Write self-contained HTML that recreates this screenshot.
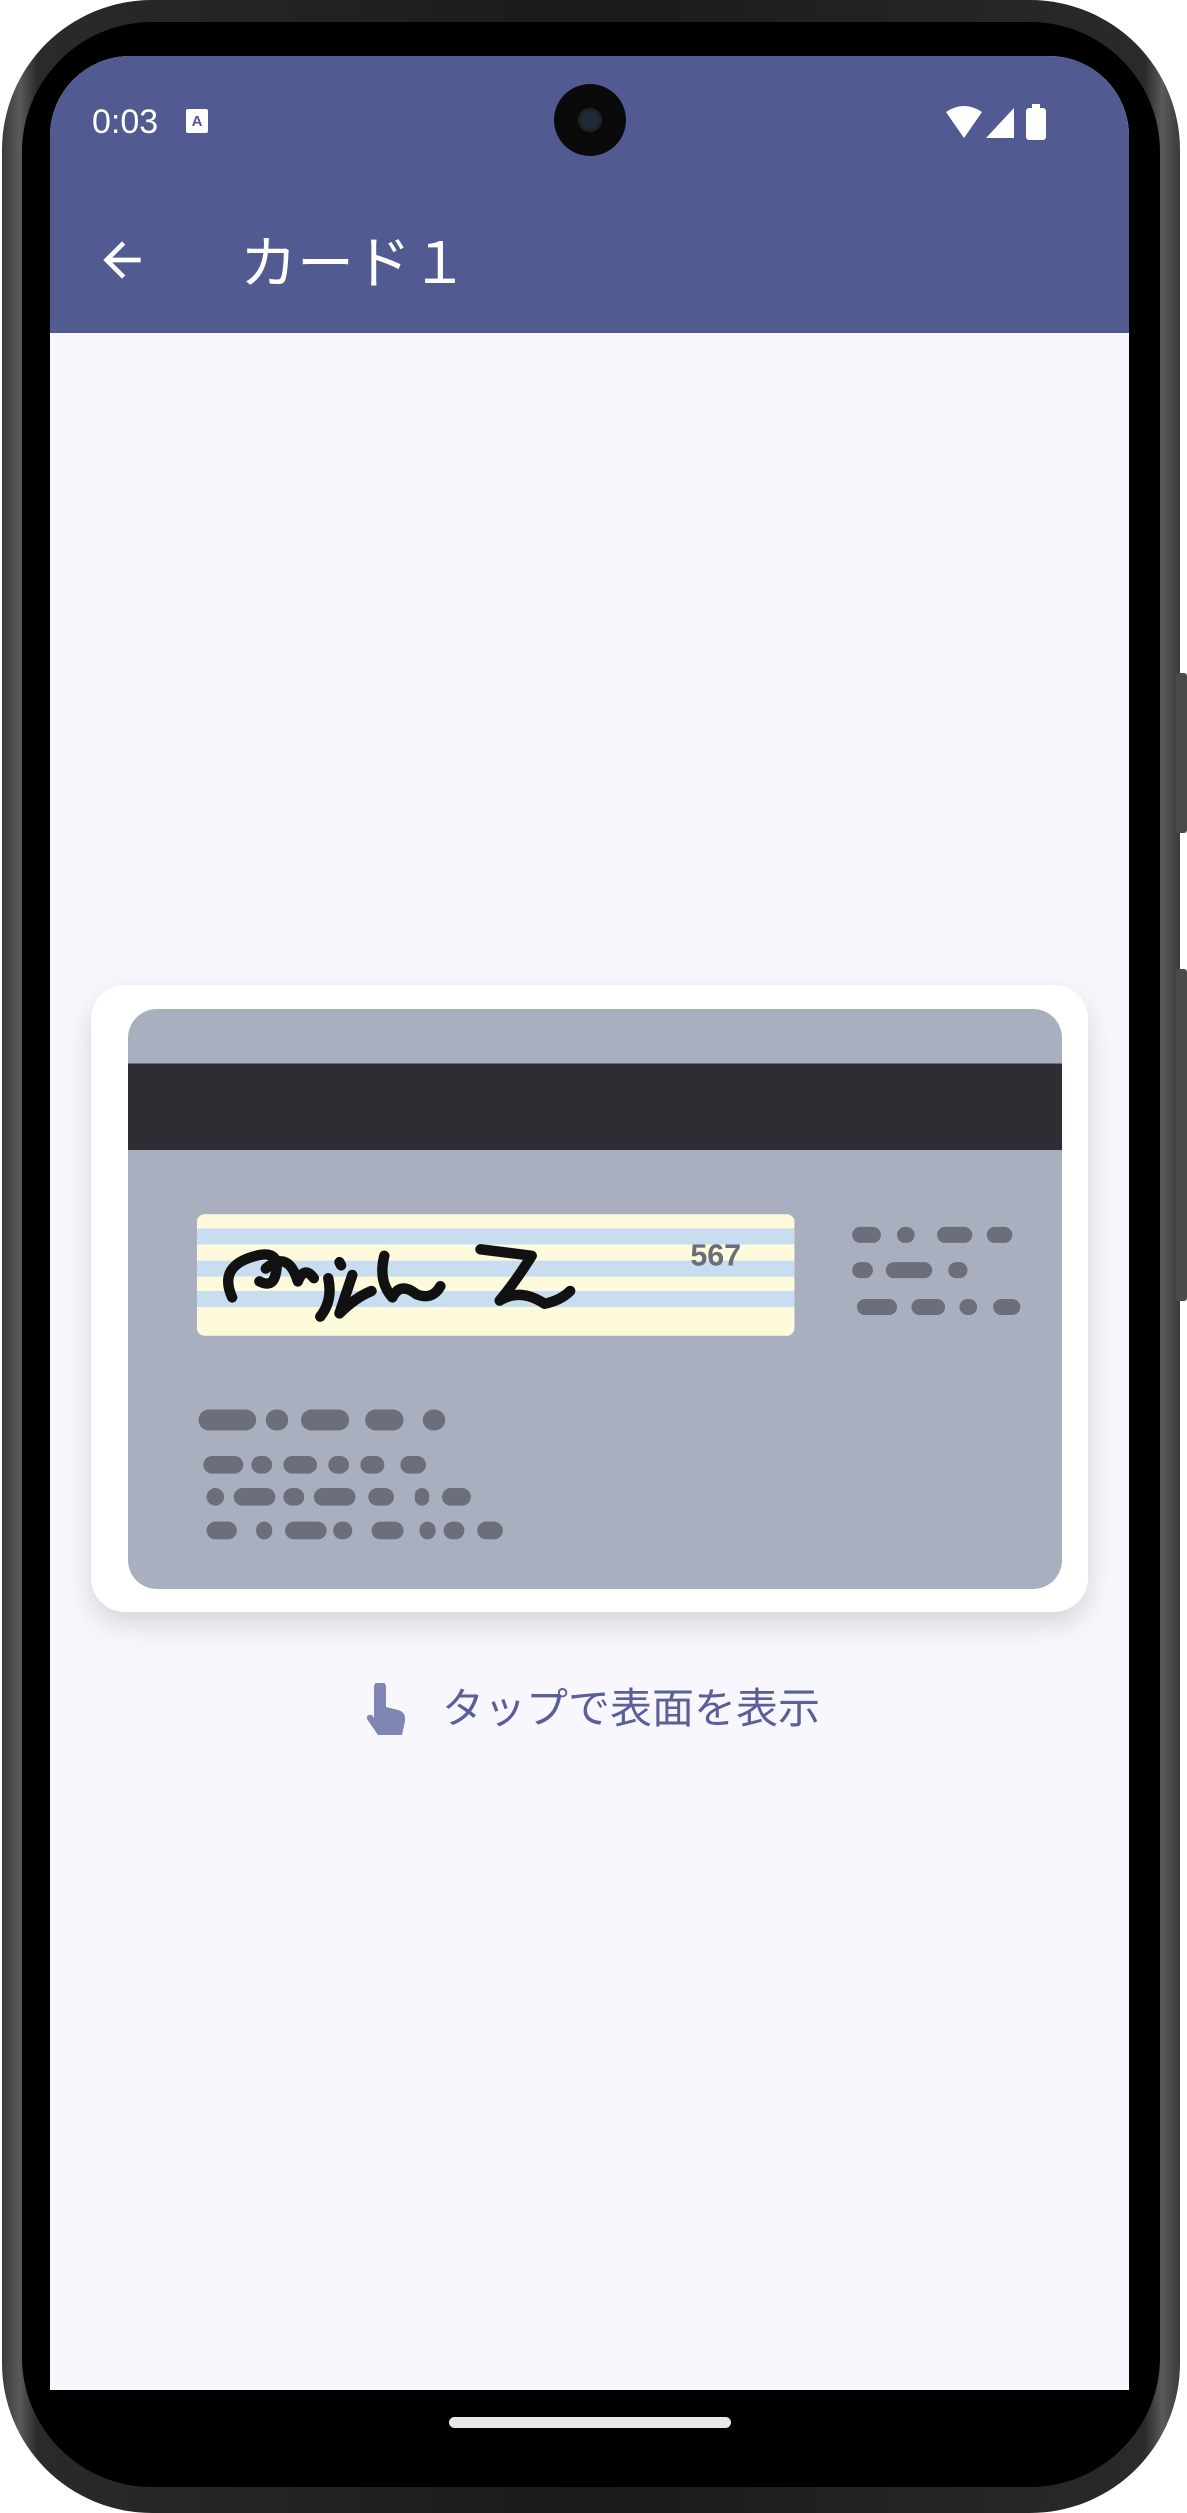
<!DOCTYPE html>
<html><head><meta charset="utf-8"><style>
*{margin:0;padding:0;box-sizing:border-box}
html,body{width:1187px;height:2513px;background:#fff;overflow:hidden;font-family:"Liberation Sans","Noto Sans CJK JP",sans-serif}
.frame{position:absolute;left:2px;top:0;width:1178px;height:2513px;border-radius:150px;background:linear-gradient(90deg,#3a3a3a,#5a5a5a 1.5%,#2a2a2a 3%,#1a1a1a 50%,#2a2a2a 97%,#5a5a5a 98.5%,#3a3a3a)}
.bezel{position:absolute;left:22px;top:22px;width:1138px;height:2465px;border-radius:130px;background:#000}
.btn{position:absolute;left:1176px;width:11px;background:#4a4a4a;border-radius:3px}
.screen{position:absolute;left:50px;top:56px;width:1079px;height:2334px;background:#f9f7fe;border-radius:80px 80px 0 0;overflow:hidden}
.appbar{position:absolute;left:0;top:0;width:100%;height:277px;background:#515b92}
.time{position:absolute;left:42px;top:47px;color:#fff;font-size:34px}
.cam{position:absolute;left:504px;top:28px;width:72px;height:72px;border-radius:50%;background:#0a0a0a}
.cam i{position:absolute;left:24px;top:24px;width:24px;height:24px;border-radius:50%;background:#1d2a3a;border:3px solid #222}
.title{position:absolute;left:190px;top:170px;color:#fff;font-size:57px;line-height:76px}
.card{position:absolute;left:41px;top:929px;width:997px;height:627px;background:#fff;border-radius:34px;box-shadow:0 12px 28px rgba(0,0,0,.14)}
.cap{position:absolute;left:392px;top:1625px;color:#5a5f99;font-size:42px;line-height:56px}
.home{position:absolute;left:449px;top:2417px;width:282px;height:11px;border-radius:6px;background:#e8e8e8}
</style></head><body>
<div class="frame"></div>
<div class="btn" style="top:673px;height:160px"></div>
<div class="btn" style="top:969px;height:332px"></div>
<div class="bezel"></div>
<div class="screen">
 <div class="appbar">
  <div class="time">0:03</div>
  <svg style="position:absolute;left:136px;top:53px" width="22" height="24" viewBox="0 0 22 24"><rect width="22" height="24" rx="2" fill="#fff"/><text x="11" y="17" font-size="15" text-anchor="middle" fill="#515b92" font-family="Liberation Sans" font-weight="bold">A</text></svg>
  <div class="cam"><i></i></div>
  <svg style="position:absolute;left:896px;top:48px" width="120" height="40" viewBox="0 0 120 40">
   <path d="M0 8 Q18 -4 36 8 L18 34 Z" fill="#fff"/>
   <path d="M68 4 L68 34 L40 34 Z" fill="#fff"/>
   <rect x="80" y="4" width="20" height="32" rx="3" fill="#fff"/><rect x="86" y="0" width="8" height="5" fill="#fff"/>
  </svg>
  <svg style="position:absolute;left:44px;top:176px" width="56" height="56" viewBox="0 0 24 24"><path d="M20 11H7.8l5.6-5.6L12 4l-8 8 8 8 1.4-1.4L7.8 13H20z" fill="#fff"/></svg>
  <div class="title">カード１</div>
 </div>
 <div class="card"></div>
 <svg style="position:absolute;left:78px;top:953px" width="934" height="580" viewBox="80 630 583 362">
  <rect x="80" y="630" width="583" height="362" rx="18" fill="#a9afbf"/>
  <rect x="80" y="664" width="583" height="54" fill="#2f2d33"/>
  <clipPath id="c"><rect x="123" y="758" width="373" height="76" rx="5"/></clipPath>
  <g clip-path="url(#c)">
   <rect x="123" y="758" width="373" height="76" fill="#fefbdc"/>
   <rect x="123" y="767" width="373" height="10" fill="#c8ddf0"/>
   <rect x="123" y="787" width="373" height="10" fill="#c8ddf0"/>
   <rect x="123" y="806" width="373" height="10" fill="#c8ddf0"/>
  </g>
  <text x="431" y="790" font-size="19" font-weight="bold" fill="#6b6e7a" font-family="Liberation Sans">567</text>
  <path d="M145 810 Q136 790 160 784 Q176 780 172 796 Q170 804 162 800 M166 792 Q180 780 186 800 Q190 790 196 798 M205 798 Q208 812 200 822 M212 788 L213 790 M220 796 Q214 814 212 820 Q222 810 232 806 M240 784 Q236 800 245 810 Q250 800 260 808 Q270 812 275 803 M300 780 L332 784 Q322 800 312 812 Q325 804 340 814 Q350 812 356 806" fill="none" stroke="#111" stroke-width="6.5" stroke-linecap="round" stroke-linejoin="round"/>
  <g fill="#6c6f7b">
   <rect x="124" y="880" width="36" height="13" rx="6.5"/><rect x="166" y="880" width="14" height="13" rx="6.5"/><rect x="188" y="880" width="30" height="13" rx="6.5"/><rect x="228" y="880" width="24" height="13" rx="6.5"/><rect x="264" y="880" width="14" height="13" rx="6.5"/>
   <rect x="127" y="909" width="25" height="11" rx="5.5"/><rect x="157" y="909" width="13" height="11" rx="5.5"/><rect x="177" y="909" width="21" height="11" rx="5.5"/><rect x="205" y="909" width="13" height="11" rx="5.5"/><rect x="225" y="909" width="15" height="11" rx="5.5"/><rect x="250" y="909" width="16" height="11" rx="5.5"/>
   <rect x="129" y="929" width="11" height="11" rx="5.5"/><rect x="146" y="929" width="26" height="11" rx="5.5"/><rect x="177" y="929" width="13" height="11" rx="5.5"/><rect x="196" y="929" width="26" height="11" rx="5.5"/><rect x="230" y="929" width="16" height="11" rx="5.5"/><rect x="259" y="929" width="9" height="11" rx="4.5"/><rect x="276" y="929" width="18" height="11" rx="5.5"/>
   <rect x="129" y="950" width="19" height="11" rx="5.5"/><rect x="160" y="950" width="10" height="11" rx="5"/><rect x="178" y="950" width="26" height="11" rx="5.5"/><rect x="208" y="950" width="12" height="11" rx="5.5"/><rect x="232" y="950" width="20" height="11" rx="5.5"/><rect x="262" y="950" width="10" height="11" rx="5"/><rect x="277" y="950" width="13" height="11" rx="5.5"/><rect x="298" y="950" width="16" height="11" rx="5.5"/>
   <rect x="532" y="766" width="18" height="10" rx="5"/><rect x="560" y="766" width="11" height="10" rx="5"/><rect x="585" y="766" width="22" height="10" rx="5"/><rect x="616" y="766" width="16" height="10" rx="5"/>
   <rect x="532" y="788" width="13" height="10" rx="5"/><rect x="553" y="788" width="29" height="10" rx="5"/><rect x="592" y="788" width="12" height="10" rx="5"/>
   <rect x="535" y="811" width="25" height="10" rx="5"/><rect x="569" y="811" width="21" height="10" rx="5"/><rect x="599" y="811" width="11" height="10" rx="5"/><rect x="620" y="811" width="17" height="10" rx="5"/>
  </g>
 </svg>
 <svg style="position:absolute;left:314px;top:1627px" width="46" height="56" viewBox="0 0 46 56"><path d="M10 4 a6 6 0 0 1 12 0 V24 L34 27 Q42 29 41 38 L38 52 H14 L3 36 Q2 31 8 32 L10 35 Z" fill="#7f86b3"/></svg>
 <div class="cap">タップで表面を表示</div>
</div>
<div class="home"></div>
</body></html>
